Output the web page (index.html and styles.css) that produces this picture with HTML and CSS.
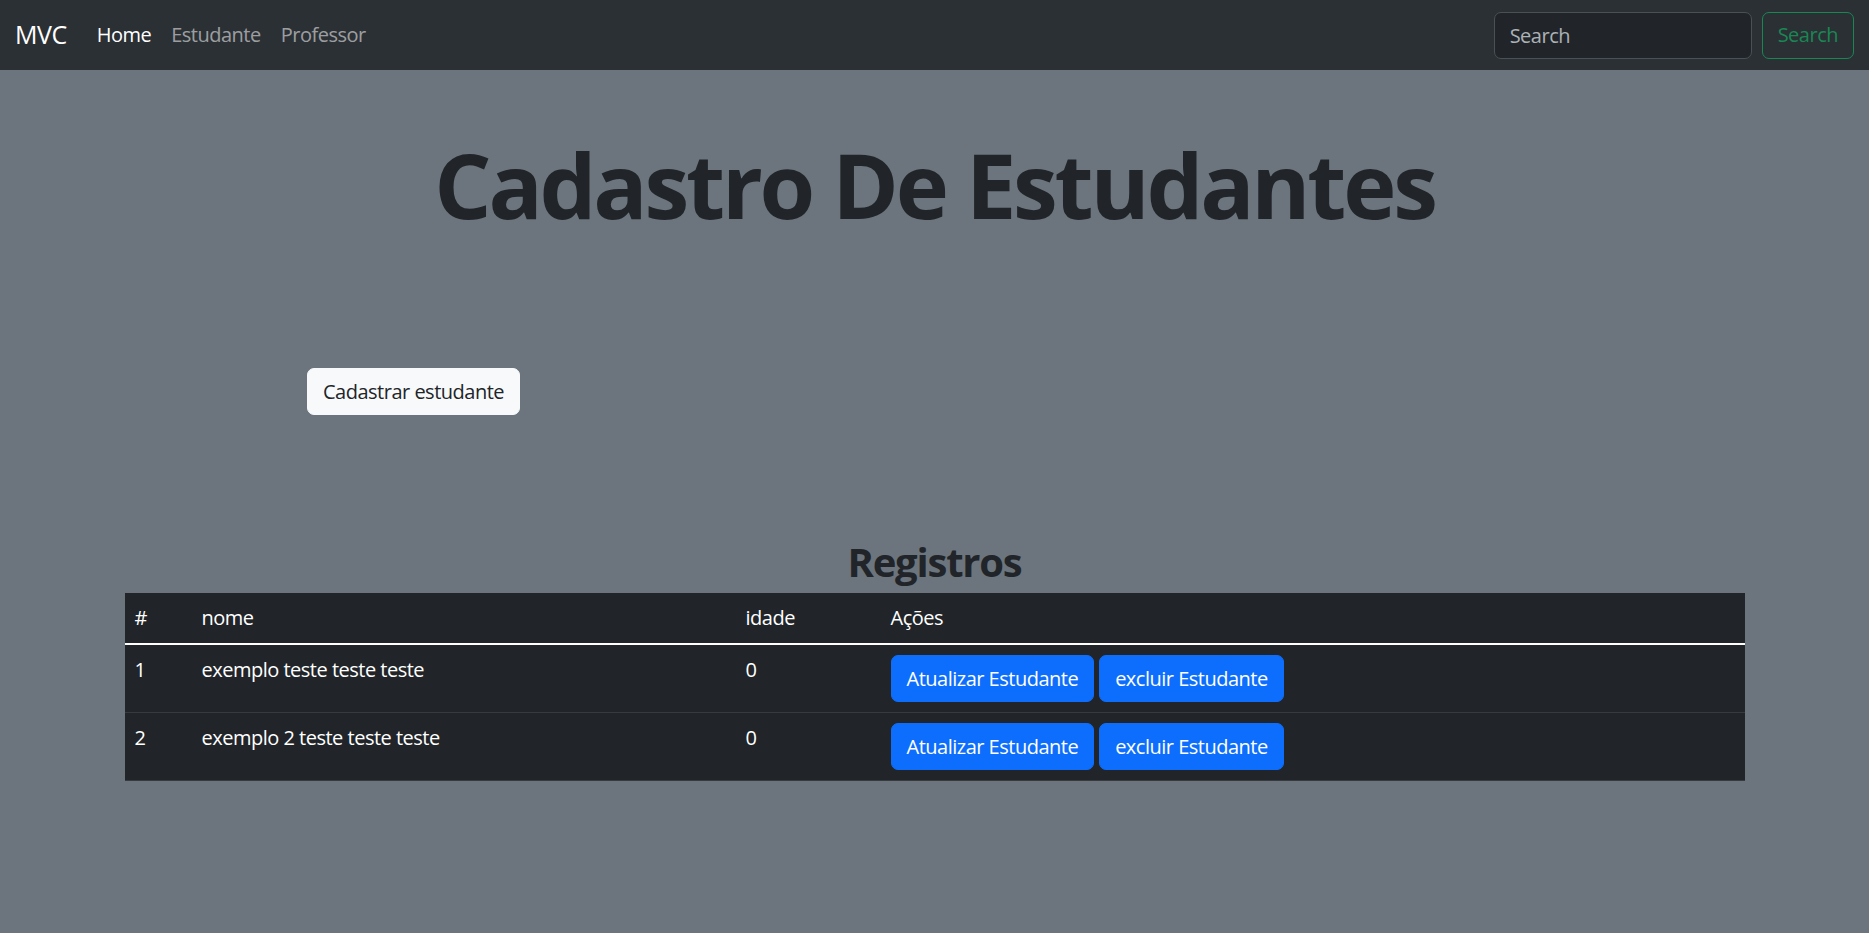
FILE: index.html
```html
<!DOCTYPE html>
<html lang="pt-br">
<head>
<meta charset="utf-8">
<title>Cadastro De Estudantes</title>
<link rel="stylesheet" href="styles.css">
</head>
<body>
<nav class="navbar">
  <div class="nav-left">
    <a class="brand" href="#">MVC</a>
    <ul class="nav-links">
      <li><a class="nav-link active" href="#">Home</a></li>
      <li><a class="nav-link" href="#">Estudante</a></li>
      <li><a class="nav-link" href="#">Professor</a></li>
    </ul>
  </div>
  <form class="search-form">
    <input class="search-input" type="search" placeholder="Search">
    <button class="btn btn-outline-success" type="button">Search</button>
  </form>
</nav>

<main class="main">
  <h1 class="title">Cadastro De Estudantes</h1>
  <div class="actions">
    <button class="btn btn-light" type="button">Cadastrar estudante</button>
  </div>
  <section class="container">
    <h2 class="subtitle">Registros</h2>
    <table class="table">
      <thead>
        <tr>
          <th class="c-id">#</th>
          <th class="c-nome">nome</th>
          <th class="c-idade">idade</th>
          <th>Ações</th>
        </tr>
      </thead>
      <tbody>
        <tr>
          <td>1</td>
          <td>exemplo teste teste teste</td>
          <td>0</td>
          <td class="cell-actions"><button class="btn btn-primary" type="button">Atualizar Estudante</button><button class="btn btn-primary" type="button">excluir Estudante</button></td>
        </tr>
        <tr>
          <td>2</td>
          <td>exemplo 2 teste teste teste</td>
          <td>0</td>
          <td class="cell-actions"><button class="btn btn-primary" type="button">Atualizar Estudante</button><button class="btn btn-primary" type="button">excluir Estudante</button></td>
        </tr>
      </tbody>
    </table>
  </section>
</main>
</body>
</html>
```

FILE: styles.css
```css
* { box-sizing: border-box; }

body {
  margin: 0;
  background: #6c757d;
  color: #212529;
  font-family: "Open Sans", "Noto Sans", sans-serif;
  font-size: 20px;
  line-height: 1.5;
  letter-spacing: -0.5px;
}

a { text-decoration: none; }

.navbar {
  height: 70px;
  background: #2b3035;
  padding: 0 15px;
  display: flex;
  align-items: center;
  justify-content: space-between;
}

.nav-left {
  display: flex;
  align-items: center;
}

.brand {
  color: #fff;
  font-size: 25px;
  line-height: 1.5;
  margin-right: 20px;
}

.nav-links {
  list-style: none;
  margin: 0;
  padding: 0;
  display: flex;
}

.nav-link {
  display: block;
  padding: 10px;
  color: rgba(255, 255, 255, 0.55);
}

.nav-link.active { color: #fff; }

.search-form {
  display: flex;
  gap: 10px;
}

.search-input {
  width: 258px;
  height: 47px;
  padding: 7px 15px;
  background: #212529;
  border: 1px solid #495057;
  border-radius: 7px;
  color: #dee2e6;
  font-family: inherit;
  font-size: 20px;
  letter-spacing: -0.5px;
}

.search-input::placeholder { color: rgba(222, 226, 230, 0.75); }

.btn {
  font-family: inherit;
  font-size: 20px;
  letter-spacing: -0.5px;
  line-height: 30px;
  height: 47px;
  padding: 7px 15px;
  border-radius: 7px;
  border: 1px solid transparent;
  cursor: pointer;
}

.btn-outline-success {
  background: transparent;
  color: #198754;
  border-color: #198754;
}

.btn-light {
  background: #f8f9fa;
  color: #212529;
  border-color: #f8f9fa;
}

.btn-primary {
  background: #0d6efd;
  color: #fff;
  border-color: #0d6efd;
}

.main { padding-top: 60px; }

.title {
  margin: 0;
  text-align: center;
  font-size: 90px;
  font-weight: 700;
  line-height: 1.2;
  letter-spacing: -3.2px;
}

.actions {
  padding-left: 307px;
  margin-top: 130px;
}

.container {
  width: 1620px;
  margin: 123px auto 0;
}

.subtitle {
  margin: 0 0 7px;
  text-align: center;
  font-size: 40px;
  font-weight: 700;
  line-height: 1.2;
  letter-spacing: -1.2px;
}

.table {
  width: 100%;
  border-collapse: collapse;
  background: #212529;
  color: #fff;
  text-align: left;
  vertical-align: top;
}

.table th,
.table td {
  padding: 10px;
  font-weight: 400;
  vertical-align: top;
  border-bottom: 1px solid #373b3e;
}

.table thead th { border-bottom: 2px solid #fff; }

.c-id { width: 67px; }
.c-nome { width: 544px; }
.c-idade { width: 145px; }

.cell-actions .btn + .btn { margin-left: 5px; }
```
